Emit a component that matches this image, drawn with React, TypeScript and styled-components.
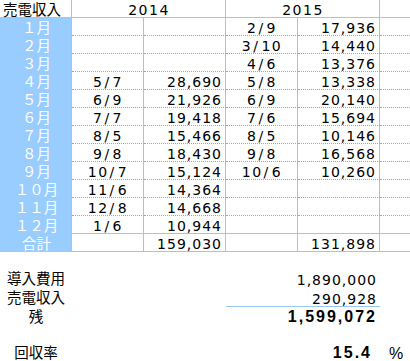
import React from "react";
import styled, { createGlobalStyle, css } from "styled-components";

const LINE = "#99c6f2";
const DOT = "#73b1ee";
const LABEL_BG = "#99ccff";
const NUM_FONT = `"DejaVu Sans", "Liberation Sans", sans-serif`;

const GlobalStyle = createGlobalStyle`
  body {
    margin: 0;
    background: #fff;
    font-family: "Liberation Sans", "Noto Sans CJK JP", sans-serif;
    color: #000;
  }
`;

const Sheet = styled.div`
  width: 410px;
  height: 361px;
  overflow: hidden;
`;

const Grid = styled.div`
  display: grid;
  grid-template-columns: 72px 72px 82px 72px 82px 30px;
  grid-auto-rows: 18px;
`;

type Rule = "dot" | "solid" | "none";
type Kind = "label" | "head" | "title" | "date" | "num" | "blank";

const Cell = styled.div<{ $kind: Kind; $rule: Rule; $span?: number; $edge?: boolean }>`
  box-sizing: border-box;
  height: 18px;
  padding-top: 2px;
  line-height: 16px;
  font-size: 14px;
  white-space: nowrap;
  border-right: ${(p) => (p.$edge ? "none" : `1px solid ${LINE}`)};
  border-bottom: ${(p) =>
    p.$rule === "dot" ? `1px dotted ${DOT}` : p.$rule === "solid" ? `1px solid ${LINE}` : "none"};
  grid-column: ${(p) => (p.$span ? `span ${p.$span}` : "auto")};
  ${(p) =>
    p.$kind === "label" &&
    css`
      background: ${LABEL_BG};
      color: #fff;
      text-align: center;
      font-size: 14.5px;
      padding-left: 2px;
    `}
  ${(p) =>
    p.$kind === "head" &&
    css`
      padding-left: 3px;
      font-size: 14.5px;
    `}
  ${(p) =>
    (p.$kind === "title" || p.$kind === "date") &&
    css`
      font-family: ${NUM_FONT};
      text-align: center;
      letter-spacing: 1.5px;
      padding-left: 1px;
    `}
  ${(p) =>
    p.$kind === "num" &&
    css`
      font-family: ${NUM_FONT};
      text-align: right;
      letter-spacing: 1px;
      padding-right: 3px;
    `}
`;

const Slash = styled.span`
  padding: 0 2px 0 1px;
`;

const Summary = styled.div`
  display: grid;
  grid-template-columns: 72px 72px 82px 72px 82px 30px;
  grid-auto-rows: 19px;
  margin-top: 17px;
`;

const Ratio = styled(Summary)`
  margin-top: 17px;
`;

const SumLabel = styled.div`
  grid-column: 1;
  text-align: center;
  font-size: 14.5px;
  line-height: 16px;
  padding-top: 2px;
  white-space: nowrap;
`;

const SumValue = styled.div<{ $bold?: boolean; $underline?: boolean; $inset?: number }>`
  grid-column: 4 / span 2;
  box-sizing: border-box;
  text-align: right;
  white-space: nowrap;
  font-family: ${(p) => (p.$bold ? `"Liberation Sans", sans-serif` : NUM_FONT)};
  font-size: ${(p) => (p.$bold ? "16px" : "14px")};
  font-weight: ${(p) => (p.$bold ? 700 : 400)};
  letter-spacing: ${(p) => (p.$bold ? "2px" : "1px")};
  line-height: 16px;
  padding-top: ${(p) => (p.$bold ? "2px" : "3px")};
  padding-right: ${(p) => (p.$inset ?? 3)}px;
  border-bottom: ${(p) => (p.$underline ? `1px solid ${LINE}` : "none")};
`;

const Unit = styled.div`
  grid-column: 6;
  text-align: center;
  font-family: "Liberation Sans", sans-serif;
  font-size: 16px;
  line-height: 16px;
  padding-top: 3px;
  padding-left: 2px;
`;

type Month = {
  label: string;
  a?: [string, string];
  b?: [string, string];
};

const months: Month[] = [
  { label: "１月", b: ["2/9", "17,936"] },
  { label: "２月", b: ["3/10", "14,440"] },
  { label: "３月", b: ["4/6", "13,376"] },
  { label: "４月", a: ["5/7", "28,690"], b: ["5/8", "13,338"] },
  { label: "５月", a: ["6/9", "21,926"], b: ["6/9", "20,140"] },
  { label: "６月", a: ["7/7", "19,418"], b: ["7/6", "15,694"] },
  { label: "７月", a: ["8/5", "15,466"], b: ["8/5", "10,146"] },
  { label: "８月", a: ["9/8", "18,430"], b: ["9/8", "16,568"] },
  { label: "９月", a: ["10/7", "15,124"], b: ["10/6", "10,260"] },
  { label: "１０月", a: ["11/6", "14,364"] },
  { label: "１１月", a: ["12/8", "14,668"] },
  { label: "１２月", a: ["1/6", "10,944"] },
];

function DateText({ value }: { value?: string }) {
  if (!value) return null;
  const [m, d] = value.split("/");
  return (
    <>
      {m}
      <Slash>/</Slash>
      {d}
    </>
  );
}

export default function App() {
  return (
    <Sheet>
      <GlobalStyle />
      <Grid>
        <Cell $kind="head" $rule="solid">売電収入</Cell>
        <Cell $kind="title" $rule="solid" $span={2}>2014</Cell>
        <Cell $kind="title" $rule="solid" $span={2}>2015</Cell>
        <Cell $kind="blank" $rule="solid" $edge />

        {months.map((m, i) => {
          const rule: Rule = i === months.length - 1 ? "solid" : "dot";
          return (
            <React.Fragment key={m.label}>
              <Cell $kind="label" $rule="none">{m.label}</Cell>
              <Cell $kind="date" $rule={rule}><DateText value={m.a?.[0]} /></Cell>
              <Cell $kind="num" $rule={rule}>{m.a?.[1]}</Cell>
              <Cell $kind="date" $rule={rule}><DateText value={m.b?.[0]} /></Cell>
              <Cell $kind="num" $rule={rule}>{m.b?.[1]}</Cell>
              <Cell $kind="blank" $rule={rule} $edge />
            </React.Fragment>
          );
        })}

        <Cell $kind="label" $rule="none">合計</Cell>
        <Cell $kind="date" $rule="solid" />
        <Cell $kind="num" $rule="solid">159,030</Cell>
        <Cell $kind="date" $rule="solid" />
        <Cell $kind="num" $rule="solid">131,898</Cell>
        <Cell $kind="blank" $rule="solid" $edge />
      </Grid>

      <Summary>
        <SumLabel>導入費用</SumLabel>
        <SumValue>1,890,000</SumValue>
        <SumLabel>売電収入</SumLabel>
        <SumValue $underline>290,928</SumValue>
        <SumLabel>残</SumLabel>
        <SumValue $bold>1,599,072</SumValue>
      </Summary>

      <Ratio>
        <SumLabel>回収率</SumLabel>
        <SumValue $bold $inset={8}>15.4</SumValue>
        <Unit>%</Unit>
      </Ratio>
    </Sheet>
  );
}
